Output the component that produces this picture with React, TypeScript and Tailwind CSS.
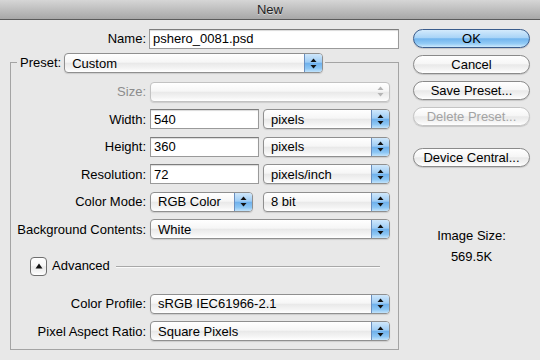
import React from "react";

const aquaBtn =
  "bg-[linear-gradient(to_bottom,#ffffff_0%,#f6f6f6_45%,#e9e9e9_52%,#f4f4f4_80%,#ffffff_100%)]";
const blueSeg =
  "bg-[linear-gradient(to_bottom,#cfe7fb_0%,#9fcdf5_45%,#6fb1ec_52%,#8cc6f4_80%,#c2e3fb_100%)]";

const Arrows: React.FC<{ dim?: boolean }> = ({ dim }) => (
  <svg width="7" height="11" viewBox="0 0 7 11">
    <path d="M3.5 0.5 L6.5 4 L0.5 4 Z" fill={dim ? "#b5b5b5" : "#111"} />
    <path d="M3.5 10.5 L6.5 7 L0.5 7 Z" fill={dim ? "#b5b5b5" : "#111"} />
  </svg>
);

interface PopupProps {
  value?: string;
  className: string;
  disabled?: boolean;
}

const Popup: React.FC<PopupProps> = ({ value, className, disabled }) => (
  <div
    className={`flex h-[20px] overflow-hidden rounded-[4px] border shadow-[0_1px_1px_rgba(0,0,0,0.12)] ${
      disabled ? "border-[#c2c2c2]" : "border-[#8f8f8f]"
    } ${aquaBtn} ${className}`}
  >
    <div className="flex flex-1 items-center pl-[7px] leading-none">{value}</div>
    {disabled ? (
      <div className="flex w-[18px] items-center justify-center">
        <Arrows dim />
      </div>
    ) : (
      <div className={`flex w-[18px] items-center justify-center border-l border-[#6a8fbf] ${blueSeg}`}>
        <Arrows />
      </div>
    )}
  </div>
);

const TextBox: React.FC<{ value: string; className: string }> = ({ value, className }) => (
  <div
    className={`flex h-[20px] items-center border border-[#9a9a9a] border-t-[#7d7d7d] bg-white pl-[3px] shadow-[inset_0_1px_1px_rgba(0,0,0,0.15)] ${className}`}
  >
    {value}
  </div>
);

const Row: React.FC<{ label: string; dim?: boolean; children: React.ReactNode }> = ({ label, dim, children }) => (
  <div className="flex h-[27.5px] items-center">
    <div className={`w-[135px] text-right ${dim ? "text-[#8c8c8c]" : ""}`}>{label}</div>
    <div className="ml-[4px] flex items-center">{children}</div>
  </div>
);

const Button: React.FC<{ label: string; primary?: boolean; disabled?: boolean }> = ({ label, primary, disabled }) => (
  <div
    className={`flex h-[19px] w-[117px] items-center justify-center rounded-full border leading-none shadow-[0_1px_1px_rgba(0,0,0,0.15)] ${
      primary
        ? "border-[#3a5c8c] bg-[linear-gradient(to_bottom,#d3eafc_0%,#a9d4f7_45%,#72b5ee_52%,#93cbf5_80%,#cdeafd_100%)]"
        : disabled
        ? `border-[#c4c4c4] text-[#a3a3a3] ${aquaBtn}`
        : `border-[#8a8a8a] ${aquaBtn}`
    }`}
  >
    {label}
  </div>
);

export default function App() {
  return (
    <div className="h-[360px] w-[540px] overflow-hidden bg-[#e8e8e8] font-['Liberation_Sans',Arial,sans-serif] text-[13px] text-black">
      {/* title bar */}
      <div className="flex h-[20px] items-center justify-center border-b border-[#5a5a5a] bg-[linear-gradient(to_bottom,#d6d6d6,#a7a7a7)] text-[13px] text-[#1e1e1e] [text-shadow:0_1px_0_rgba(255,255,255,0.5)]">
        New
      </div>

      <div className="flex pt-[9px]">
        {/* left side */}
        <div className="w-[399px]">
          <div className="flex h-[20px] items-center">
            <div className="w-[146px] text-right">Name:</div>
            <TextBox value="pshero_0081.psd" className="ml-[3px] w-[250px]" />
          </div>

          {/* preset group box */}
          <div className="ml-[10px] mt-[13px] h-[288px] w-[389px] border border-[#a4a4a4]">
            <div className="-mt-[10px] ml-[6px] flex w-fit items-center bg-[#e8e8e8] pl-[3px] pr-[2px]">
              <span>Preset:</span>
              <Popup value="Custom" className="ml-[3px] w-[259px]" />
            </div>

            <div className="pt-[5px]">
              <Row label="Size:" dim>
                <Popup className="w-[240px]" disabled />
              </Row>
              <Row label="Width:">
                <TextBox value="540" className="w-[109px]" />
                <Popup value="pixels" className="ml-[4px] w-[127px]" />
              </Row>
              <Row label="Height:">
                <TextBox value="360" className="w-[109px]" />
                <Popup value="pixels" className="ml-[4px] w-[127px]" />
              </Row>
              <Row label="Resolution:">
                <TextBox value="72" className="w-[109px]" />
                <Popup value="pixels/inch" className="ml-[4px] w-[127px]" />
              </Row>
              <Row label="Color Mode:">
                <Popup value="RGB Color" className="w-[103px]" />
                <Popup value="8 bit" className="ml-[10px] w-[127px]" />
              </Row>
              <Row label="Background Contents:">
                <Popup value="White" className="w-[240px]" />
              </Row>

              <div className="mt-[13px] flex h-[20px] items-center">
                <div className={`ml-[19px] flex h-[19px] w-[17px] items-center justify-center rounded-[4px] border border-[#6e6e6e] ${aquaBtn}`}>
                  <svg width="8" height="6" viewBox="0 0 8 6">
                    <path d="M4 0.5 L7.5 5.5 L0.5 5.5 Z" fill="#111" />
                  </svg>
                </div>
                <span className="ml-[5px]">Advanced</span>
                <div className="ml-[6px] mr-[18px] h-px flex-1 bg-[#a8a8a8] shadow-[0_1px_0_#fafafa]" />
              </div>

              <div className="mt-[14px]">
                <Row label="Color Profile:">
                  <Popup value="sRGB IEC61966-2.1" className="w-[240px]" />
                </Row>
                <Row label="Pixel Aspect Ratio:">
                  <Popup value="Square Pixels" className="w-[240px]" />
                </Row>
              </div>
            </div>
          </div>
        </div>

        {/* right side */}
        <div className="ml-[14px] flex w-[117px] flex-col">
          <div className="flex flex-col gap-[7px]">
            <Button label="OK" primary />
            <Button label="Cancel" />
            <Button label="Save Preset..." />
            <Button label="Delete Preset..." disabled />
          </div>
          <div className="mt-[22px]">
            <Button label="Device Central..." />
          </div>
          <div className="mt-[61px] text-center leading-[16px]">Image Size:</div>
          <div className="mt-[5px] text-center leading-[16px]">569.5K</div>
        </div>
      </div>
    </div>
  );
}
